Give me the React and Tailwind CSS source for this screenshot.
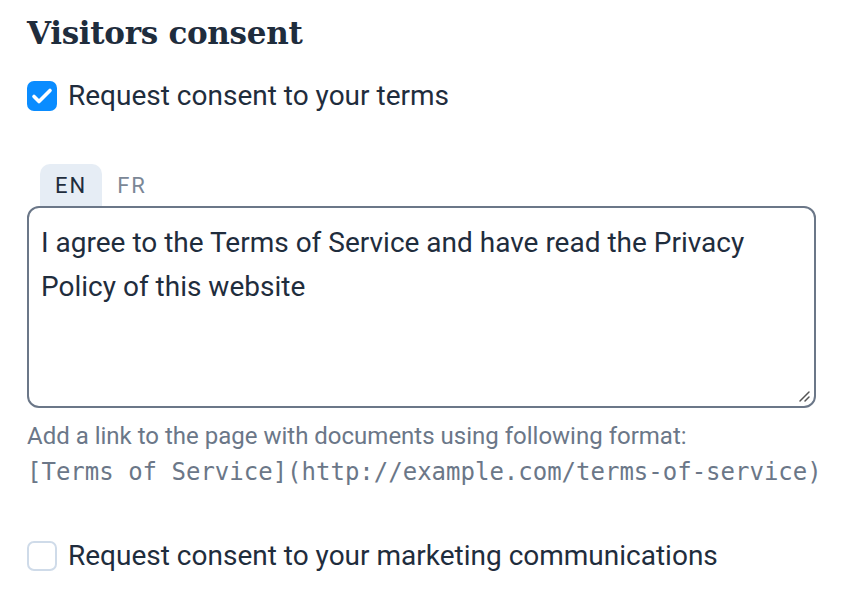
export default function App() {
  return (
    <div className="min-h-screen bg-white pl-[27px] pr-[40px] pt-[12px] text-[#1f2d3d] font-['Roboto',sans-serif]">
      <h2 className="font-['DejaVu_Serif',serif] font-bold text-[31px] leading-[42px] tracking-[-0.3px]">
        Visitors consent
      </h2>
      <label className="mt-[26px] flex items-center gap-[11px]">
        <span className="flex h-[30px] w-[30px] shrink-0 items-center justify-center rounded-[7px] bg-[#0a8cff]">
          <svg width="24" height="24" viewBox="0 0 24 24" fill="none">
            <path d="M4 12.5l5 5L20 6.5" stroke="white" strokeWidth="3.6" strokeLinecap="round" strokeLinejoin="round" />
          </svg>
        </span>
        <span className="text-[28px] leading-[32px]">Request consent to your terms</span>
      </label>

      <div className="mt-[52px] flex pl-[13px]">
        <span className="flex h-[42px] w-[62px] items-center justify-center rounded-t-[10px] bg-[#e6edf5] text-[22px] tracking-[2px] text-[#1f2d3d]">
          EN
        </span>
        <span className="flex h-[42px] w-[60px] items-center justify-center text-[22px] tracking-[2px] text-[#7b8796]">
          FR
        </span>
      </div>
      <div className="relative mr-[12px] h-[202px] rounded-[12px] border-2 border-[#6b7788] pl-[12px] pr-[34px] pt-[13px]">
        <p className="text-[28px] leading-[44px]">
          I agree to the Terms of Service and have read the Privacy Policy of this website
        </p>
        <svg className="absolute bottom-[3px] right-[3px]" width="14" height="14" viewBox="0 0 14 14">
          <path d="M3 12L12 3M8 12L12 8" stroke="#555" strokeWidth="1.5" strokeLinecap="round" />
        </svg>
      </div>
      <p className="mt-[12px] text-[24px] leading-[32px] text-[#6b7788] whitespace-nowrap">
        Add a link to the page with documents using following format:
      </p>
      <p className="mt-[4px] font-['DejaVu_Sans_Mono',monospace] text-[24px] leading-[32px] text-[#6b7788] whitespace-nowrap">
        [Terms of Service](http://example.com/terms-of-service)
      </p>

      <label className="mt-[52px] flex items-center gap-[11px]">
        <span className="h-[30px] w-[30px] shrink-0 rounded-[7px] border-2 border-[#cfdbe9] bg-white" />
        <span className="text-[28px] leading-[32px]">Request consent to your marketing communications</span>
      </label>
    </div>
  );
}
